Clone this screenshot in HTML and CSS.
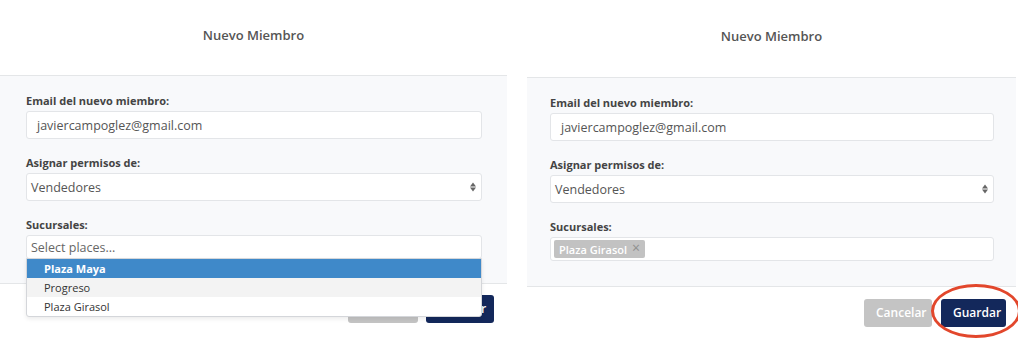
FILE: index.html
```html
<!DOCTYPE html>
<html lang="es">
<head>
  <meta charset="UTF-8" />
  <meta name="viewport" content="width=device-width, initial-scale=1.0" />
  <title>Nuevo Miembro</title>
  <link rel="stylesheet" href="styles.css">
</head>
<body>

  <div class="screens">

    <!-- Before: dropdown open -->
    <div class="modal modal-left">
      <div class="modal-header">
        <h2>Nuevo Miembro</h2>
      </div>
      <div class="modal-body">
        <label class="field-label">Email del nuevo miembro:</label>
        <div class="input-field">javiercampoglez@gmail.com</div>

        <label class="field-label">Asignar permisos de:</label>
        <div class="input-field select-field">
          Vendedores
          <span class="select-arrows"><i class="up"></i><i class="down"></i></span>
        </div>

        <label class="field-label">Sucursales:</label>
        <div class="multi-wrap">
          <div class="input-field multi-field placeholder">Select places...</div>
          <ul class="dropdown">
            <li class="active">Plaza Maya</li>
            <li class="hover">Progreso</li>
            <li>Plaza Girasol</li>
          </ul>
        </div>
      </div>
      <div class="modal-footer">
        <button class="btn btn-cancel">Cancelar</button>
        <button class="btn btn-save">Guardar</button>
      </div>
    </div>

    <!-- After: place selected -->
    <div class="modal modal-right">
      <div class="modal-header">
        <h2>Nuevo Miembro</h2>
      </div>
      <div class="modal-body">
        <label class="field-label">Email del nuevo miembro:</label>
        <div class="input-field">javiercampoglez@gmail.com</div>

        <label class="field-label">Asignar permisos de:</label>
        <div class="input-field select-field">
          Vendedores
          <span class="select-arrows"><i class="up"></i><i class="down"></i></span>
        </div>

        <label class="field-label">Sucursales:</label>
        <div class="input-field multi-field">
          <span class="tag">Plaza Girasol <span class="tag-close">&times;</span></span>
        </div>
      </div>
      <div class="modal-footer">
        <button class="btn btn-cancel">Cancelar</button>
        <button class="btn btn-save">Guardar<span class="highlight"></span></button>
      </div>
    </div>

  </div>

</body>
</html>
```

FILE: styles.css
```css
* {
  margin: 0;
  padding: 0;
  box-sizing: border-box;
  font-family: 'Open Sans', 'Liberation Sans', sans-serif;
}
body {
  background: #fff;
  width: 1018px;
  height: 339px;
  overflow: hidden;
}
.screens {
  display: flex;
  align-items: flex-start;
}
.modal {
  background: #fff;
  display: flex;
  flex-direction: column;
}
.modal-left {
  width: 507px;
}
.modal-right {
  width: 489px;
  margin-left: 20px;
}
/* Header */
.modal-header {
  height: 76px;
  display: flex;
  align-items: center;
  justify-content: center;
  border-bottom: 1px solid #e4e6e8;
}
.modal-right .modal-header {
  height: 78px;
}
.modal-header h2 {
  font-size: 13px;
  font-weight: 600;
  color: #555;
  margin-top: -6px;
}
/* Body */
.modal-body {
  background: #f8f9fb;
  padding: 17px 25px 24px 26px;
  display: flex;
  flex-direction: column;
  border-bottom: 1px solid #e4e6e8;
}
.modal-right .modal-body {
  padding: 17px 22px 25px 23px;
}
.field-label {
  font-size: 11px;
  font-weight: 700;
  color: #444;
  line-height: 15px;
  margin-bottom: 3px;
}
.input-field {
  height: 28px;
  background: #fff;
  border: 1px solid #e3e5e8;
  border-radius: 3px;
  padding: 0 10px;
  font-size: 12.5px;
  color: #555;
  display: flex;
  align-items: center;
  margin-bottom: 16px;
  position: relative;
}
.select-field {
  padding-left: 4px;
}
.select-arrows {
  position: absolute;
  right: 5px;
  top: 50%;
  transform: translateY(-50%);
  display: flex;
  flex-direction: column;
  gap: 1px;
}
.select-arrows i {
  display: block;
  width: 0;
  height: 0;
  border-left: 3px solid transparent;
  border-right: 3px solid transparent;
}
.select-arrows .up {
  border-bottom: 4px solid #666;
}
.select-arrows .down {
  border-top: 4px solid #666;
}
/* Multi select */
.multi-wrap {
  position: relative;
}
.multi-field {
  height: 24px;
  margin-bottom: 0;
  padding-left: 4px;
}
.modal-right .multi-field {
  padding-left: 3px;
}
.placeholder {
  color: #666;
}
.dropdown {
  list-style: none;
  position: absolute;
  top: 23px;
  left: 0;
  right: 0;
  background: #fff;
  border: 1px solid #d4d6da;
  border-radius: 0 0 3px 3px;
  box-shadow: 0 2px 4px rgba(0, 0, 0, 0.08);
  z-index: 5;
}
.dropdown li {
  height: 19px;
  line-height: 19px;
  padding-left: 17px;
  font-size: 11px;
  color: #333;
}
.dropdown li.active {
  background: #3f89c9;
  color: #fff;
  font-weight: 700;
}
.dropdown li.hover {
  background: #f3f3f3;
}
.tag {
  display: inline-flex;
  align-items: center;
  gap: 5px;
  height: 18px;
  padding: 0 5px;
  background: #c2c2c2;
  border-radius: 2px;
  color: #fff;
  font-size: 11px;
  font-weight: 600;
}
.tag-close {
  color: #8f8f8f;
  font-size: 14px;
  font-weight: 400;
  line-height: 1;
  margin-top: -2px;
}
/* Footer */
.modal-footer {
  height: 49px;
  display: flex;
  justify-content: flex-end;
  align-items: center;
  gap: 8px;
  padding-right: 13px;
}
.modal-right .modal-footer {
  height: 51px;
  gap: 9px;
  padding-right: 10px;
}
.btn {
  height: 28px;
  border: none;
  border-radius: 3px;
  color: #fff;
  font-size: 12px;
  font-weight: 600;
  padding: 0 12px;
  position: relative;
}
.btn-cancel {
  background: #c4c4c4;
  width: 70px;
}
.modal-right .btn-cancel {
  width: 68px;
}
.btn-save {
  background: #13285b;
  width: 68px;
}
.modal-right .btn-save {
  width: 65px;
}
/* Red circle marking the button */
.highlight {
  position: absolute;
  left: -10px;
  top: -15px;
  width: 90px;
  height: 54px;
  border: 3px solid #e2472c;
  border-radius: 50%;
}
```
